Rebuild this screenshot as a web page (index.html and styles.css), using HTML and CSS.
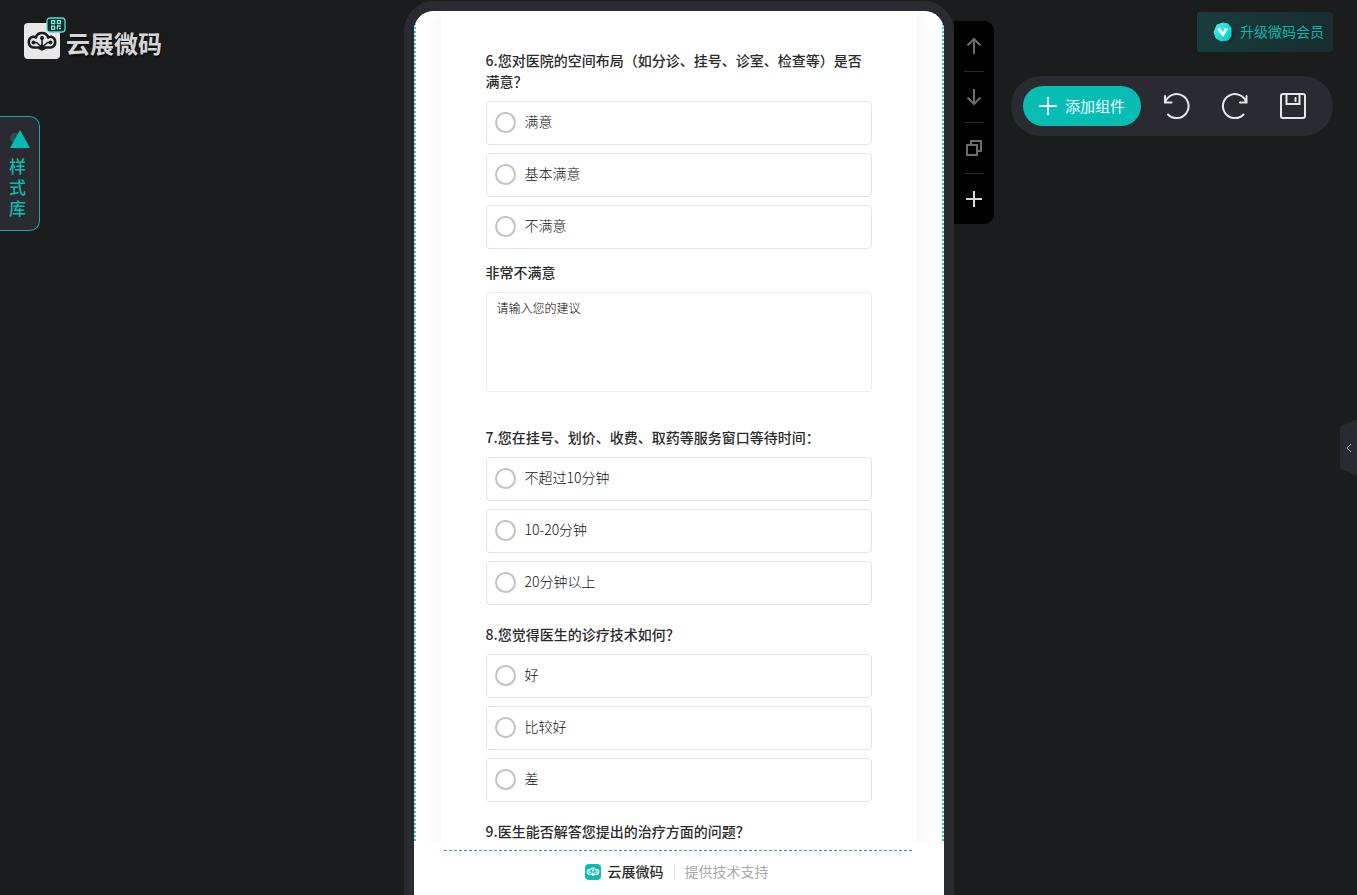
FILE: index.html
```html
<!DOCTYPE html>
<html lang="zh-CN">
<head>
<meta charset="utf-8">
<meta name="viewport" content="width=device-width, initial-scale=1">
<title>云展微码</title>
<link rel="stylesheet" href="styles.css">
</head>
<body>
<svg width="0" height="0" class="defs" aria-hidden="true">
  <symbol id="cloud" viewBox="0 0 32 20">
    <g fill="none" stroke="currentColor" stroke-linecap="round" stroke-linejoin="round">
      <path stroke-width="2.6" d="M12.500 16.500H7.300A5.500 5.500 0 0 1 6.800 5.800C8 5.700 9 6 9.800 6.500A6.500 6.500 0 0 1 22.200 6.500C23 6 24 5.700 25.200 5.800A5.500 5.500 0 0 1 24.700 16.500H19.500L16 18.400Z"/>
      <path stroke-width="1.600" d="M16 7v9M7.500 11.500L10.500 11.500L15 15.500M24.500 11.500L21.500 11.500L17 15.500"/>
    </g>
    <g fill="currentColor"><circle cx="16" cy="7" r="2"/><circle cx="7.500" cy="11.400" r="2"/><circle cx="24.500" cy="11.400" r="2"/><circle cx="16" cy="16" r="2.600"/></g>
  </symbol>
</svg>
<div class="app">
  <aside class="side side-left">
    <a class="brand" href="#">
      <span class="brand-mark">
        <svg class="brand-cloud" aria-hidden="true"><use href="#cloud"/></svg>
        <svg class="brand-qr" viewBox="0 0 20 16" aria-hidden="true">
          <rect x="1" y="1" width="18" height="14" rx="3" fill="#122c2d" stroke="#55dccb" stroke-width="1.300"/>
          <g fill="none" stroke="#7df0d2" stroke-width="1.300"><rect x="5.600" y="3.600" width="3" height="3"/><rect x="11.400" y="3.600" width="3" height="3"/><rect x="5.600" y="9.200" width="3" height="3"/><path d="M10.800 9h4M11.400 9v3.500M13 11.500h2"/></g>
        </svg>
      </span>
      <span class="brand-name">云展微码</span>
    </a>
    <button class="style-tab" type="button">
      <svg class="style-icon" viewBox="0 0 20 20" aria-hidden="true"><circle cx="5" cy="8" r="5" fill="#27504f"/><path d="M10 0l10 18H0z" fill="#06bdb3"/></svg>
      <span class="style-label">样式库</span>
    </button>
  </aside>

  <main class="phone">
    <div class="screen">
      <div class="viewport">
        <form class="card">
          <fieldset class="question">
            <legend>6.您对医院的空间布局（如分诊、挂号、诊室、检查等）是否满意？</legend>
            <label class="option"><input type="radio" name="q6">满意</label>
            <label class="option"><input type="radio" name="q6">基本满意</label>
            <label class="option"><input type="radio" name="q6">不满意</label>
          </fieldset>
          <div class="question question-text">
            <label class="title" for="advice">非常不满意</label>
            <textarea id="advice" placeholder="请输入您的建议"></textarea>
          </div>
          <fieldset class="question question-spaced">
            <legend>7.您在挂号、划价、收费、取药等服务窗口等待时间：</legend>
            <label class="option"><input type="radio" name="q7">不超过10分钟</label>
            <label class="option"><input type="radio" name="q7">10-20分钟</label>
            <label class="option"><input type="radio" name="q7">20分钟以上</label>
          </fieldset>
          <fieldset class="question">
            <legend>8.您觉得医生的诊疗技术如何？</legend>
            <label class="option"><input type="radio" name="q8">好</label>
            <label class="option"><input type="radio" name="q8">比较好</label>
            <label class="option"><input type="radio" name="q8">差</label>
          </fieldset>
          <fieldset class="question">
            <legend>9.医生能否解答您提出的治疗方面的问题？</legend>
          </fieldset>
        </form>
      </div>
      <footer class="support">
        <div class="support-row">
          <span class="support-mark"><svg aria-hidden="true"><use href="#cloud"/></svg></span>
          <strong>云展微码</strong>
          <span class="support-note">提供技术支持</span>
        </div>
      </footer>
    </div>
  </main>

  <aside class="side side-right">
    <div class="tools">
      <button type="button" aria-label="上移"><svg viewBox="0 0 20 20"><path d="M10 18V3M3.500 9.500L10 3l6.500 6.500"/></svg></button>
      <button type="button" aria-label="下移"><svg viewBox="0 0 20 20"><path d="M10 2v15M3.500 10.500L10 17l6.500-6.500"/></svg></button>
      <button type="button" aria-label="复制"><svg viewBox="0 0 20 20"><path d="M3 7h10v10H3zM7 7V3h10v10h-4"/></svg></button>
      <button type="button" aria-label="添加" class="bright"><svg viewBox="0 0 20 20"><path d="M10 2v16M2 10h16"/></svg></button>
    </div>
    <div class="actions">
      <button class="upgrade" type="button">
        <svg viewBox="0 0 24 24" aria-hidden="true">
          <defs><linearGradient id="gem" x1="0" y1="0" x2="1" y2="1"><stop offset="0" stop-color="#4af0e0"/><stop offset="1" stop-color="#05c9c6"/></linearGradient></defs>
          <ellipse cx="14" cy="14" rx="9" ry="8" fill="#0b2524" opacity=".6"/>
          <path d="M5 4l6-2 5 1 3 4v8l-3 4-7 1-5-3-2-6z" fill="url(#gem)" stroke="url(#gem)" stroke-width="1" stroke-linejoin="round"/>
          <path d="M5 8l3-1 3 4 2-4 3 1-5 8z" fill="#e9fffc"/>
        </svg>
        <span>升级微码会员</span>
      </button>
      <div class="bar">
        <button class="add" type="button"><svg viewBox="0 0 18 18" aria-hidden="true"><path d="M9 0v18M0 9h18"/></svg><span>添加组件</span></button>
        <button class="icon" type="button" aria-label="撤销"><svg viewBox="0 0 26 26"><path d="M1 3v6.500H7.500M1.300 9A12 12 0 1 1 4 21.500"/></svg></button>
        <button class="icon" type="button" aria-label="重做"><svg viewBox="0 0 26 26"><path d="M24.500 3v6.500H18M24.200 9A12 12 0 1 0 21.500 21.500"/></svg></button>
        <button class="icon" type="button" aria-label="保存"><svg viewBox="0 0 26 26"><rect x="1" y="1" width="24" height="24" rx="2"/><path d="M6.500 1v10h13V1M15.500 5v3"/></svg></button>
      </div>
    </div>
    <button class="drawer" type="button" aria-label="展开"><svg viewBox="0 0 6 10" aria-hidden="true"><path d="M5 1L1 5l4 4"/></svg></button>
  </aside>
</div>
</body>
</html>
```
FILE: styles.css
```css
* { box-sizing: border-box; }

body {
  margin: 0;
  background: #1b1c1e;
  color: #2b2b2b;
  font-family: "Noto Sans CJK SC", "Noto Sans", sans-serif;
  font-size: 14px;
  line-height: 21px;
}

button {
  margin: 0;
  padding: 0;
  border: 0;
  background: none;
  color: inherit;
  font: inherit;
  cursor: pointer;
}

svg { display: block; }
.defs { position: absolute; }

.app {
  display: grid;
  grid-template-columns: 1fr 550px 1fr;
  height: 100vh;
  overflow: hidden;
}

/* Left side */
.side-left {
  display: flex;
  flex-direction: column;
  align-items: flex-start;
  gap: 57px;
  padding-top: 23px;
}

.brand {
  display: flex;
  align-items: center;
  gap: 6px;
  height: 36px;
  margin-left: 24px;
  color: #d6d6d8;
  text-decoration: none;
}

.brand-mark {
  position: relative;
  display: grid;
  place-items: center;
  width: 36px;
  height: 36px;
  border-radius: 4px;
  background: #e8e8e8;
  color: #1b1c1e;
}

.brand-cloud { width: 32px; height: 20px; }

.brand-qr {
  position: absolute;
  top: -6px;
  right: -6px;
  width: 20px;
  height: 16px;
}

.brand-name {
  padding-top: 4px;
  font-size: 24px;
  font-weight: 700;
  line-height: 32px;
  text-shadow: 1px 2px 2px #0008;
}

.style-tab {
  display: flex;
  flex-direction: column;
  align-items: flex-start;
  gap: 5px;
  width: 40px;
  padding: 13px 9px 12px;
  border: 1px solid #18a8a0;
  border-left: 0;
  border-radius: 0 10px 10px 0;
  background: #2a2b31;
  color: #0db8af;
  font-size: 17px;
  font-weight: 500;
}

.style-icon { width: 20px; height: 20px; margin-left: 1px; }
.style-label { width: 17px; text-align: left; }

/* Phone */
.phone {
  display: flex;
  margin-top: 1px;
  padding: 10px 10px 0;
  border-radius: 30px 30px 0 0;
  background: #2a2b31;
  min-height: 0;
}

.screen {
  flex: 1;
  display: flex;
  flex-direction: column;
  border-radius: 20px 20px 0 0;
  background: #fff;
  overflow: hidden;
}

.viewport {
  flex: 1;
  min-height: 0;
  padding: 0 27px;
  overflow: hidden;
  background:
    repeating-linear-gradient(#2ac4c4 0 2px, #fff 2px 4px) left / 2px 100% no-repeat,
    repeating-linear-gradient(#2ac4c4 0 2px, #fff 2px 4px) right / 2px 100% no-repeat,
    #fff;
}

.card {
  min-height: 100%;
  padding: 20px 45px;
  box-shadow: 0 0 20px #00000012;
}

.question {
  min-width: 0;
  margin: 0;
  padding: 19px 0 0;
  border: 0;
}

.question-text { padding-top: 13px; }
.question-spaced { padding-top: 35px; }

legend,
.title {
  display: block;
  float: left;
  width: 100%;
  margin-bottom: 9px;
  padding: 0;
  font-weight: 500;
}

.option {
  clear: both;
  display: flex;
  align-items: center;
  gap: 9px;
  height: 44px;
  margin-bottom: 8px;
  padding: 0 9px 3px 8px;
  border: 1px solid #e4e4e4;
  border-radius: 4px;
  color: #111;
  font-weight: 300;
}

.option:last-child { margin-bottom: 0; }

.option input {
  appearance: none;
  width: 21px;
  height: 21px;
  margin: 2px 0 0;
  border: 2px solid #c2c2c2;
  border-radius: 50%;
}

textarea {
  display: block;
  clear: both;
  width: 100%;
  height: 100px;
  padding: 6px 10px;
  border: 1px solid #ececec;
  border-radius: 4px;
  background: #fff;
  font-family: inherit;
  font-size: 12px;
  font-weight: 300;
  line-height: 18px;
  resize: none;
}

textarea::placeholder { color: #000; opacity: 1; }

.support {
  padding: 8px 30px 13px;
  background: #fff;
}

.support-row {
  display: flex;
  align-items: center;
  justify-content: center;
  gap: 7px;
  padding: 11px 4px 0 0;
  background: repeating-linear-gradient(90deg, #1fa59d 0 3px, #fff 3px 5px) top / 100% 1px no-repeat;
}

.support-mark {
  display: grid;
  place-items: center;
  width: 16px;
  height: 16px;
  border-radius: 4px;
  background: #0cbcb2;
  color: #fff;
}

.support-mark svg { width: 14px; height: 9px; }
.support strong { font-weight: 500; }

.support-note {
  display: flex;
  align-items: center;
  gap: 10px;
  margin-left: 3px;
  color: #aaa;
}

.support-note::before {
  content: "";
  width: 1px;
  height: 14px;
  background: #ddd;
}

/* Right side */
.side-right {
  position: relative;
  display: flex;
  align-items: flex-start;
  justify-content: space-between;
}

.tools {
  width: 40px;
  margin-top: 21px;
  border-radius: 0 10px 10px 0;
  background: #000;
  color: #6c6c6c;
}

.tools button {
  display: grid;
  place-items: center;
  width: 100%;
  height: 50px;
}

.tools button + button {
  height: 51px;
  padding-top: 1px;
  background: linear-gradient(#2c2c2c, #2c2c2c) top / 20px 1px no-repeat;
}

.tools svg {
  width: 20px;
  height: 20px;
  fill: none;
  stroke: currentColor;
  stroke-width: 2;
}

.tools .bright { color: #d8d8d8; }

.actions {
  display: flex;
  flex-direction: column;
  align-items: flex-end;
  gap: 24px;
  padding: 12px 24px 0 0;
}

.upgrade {
  display: flex;
  align-items: center;
  gap: 4px;
  height: 40px;
  padding: 0 9px 0 15px;
  border-radius: 4px;
  background: linear-gradient(100deg, #183d3d, #182c2e);
  color: #12b3aa;
}

.upgrade svg { width: 24px; height: 24px; margin-top: 2px; }
.upgrade span,
.add span { padding-bottom: 2px; }

.bar {
  display: flex;
  align-items: center;
  gap: 32px;
  height: 60px;
  padding: 0 27px 0 12px;
  border-radius: 30px;
  background: #2a2b31;
  color: #e6e6e6;
}

.add {
  display: flex;
  align-items: center;
  gap: 8px;
  height: 40px;
  margin-right: -9px;
  padding: 0 16px;
  border-radius: 20px;
  background: #07bdb4;
  color: #f2ffff;
  font-size: 15px;
}

.add svg { width: 18px; height: 18px; stroke: currentColor; stroke-width: 2; }

.icon svg {
  width: 26px;
  height: 26px;
  overflow: visible;
  fill: none;
  stroke: currentColor;
  stroke-width: 2;
  stroke-linecap: round;
}

.drawer {
  position: absolute;
  right: 0;
  top: calc(50% - 28px);
  display: grid;
  place-items: center;
  width: 17px;
  height: 56px;
  background: #2a2b31;
  clip-path: polygon(0 7px, 100% 0, 100% 100%, 0 49px);
}

.drawer svg { width: 6px; height: 10px; fill: none; stroke: #bbb; stroke-width: 1; }
```
